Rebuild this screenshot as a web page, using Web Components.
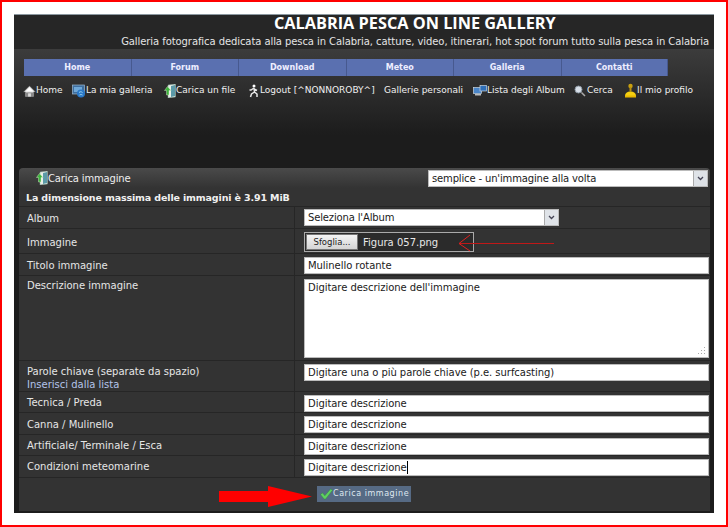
<!DOCTYPE html>
<html lang="it"><head><meta charset="utf-8">
<style>
html,body{margin:0;padding:0;background:#fff}
body{width:728px;height:527px;overflow:hidden;font:10px "DejaVu Sans",sans-serif}
</style></head><body>
<gallery-page>
  <gallery-head></gallery-head>
  <main-nav></main-nav>
  <link-bar></link-bar>
  <upload-form></upload-form>
</gallery-page>
<script>
const ICONS={
home:`<svg width="13" height="14" viewBox="0 0 14 14"><path d="M7 1.500L.5 8h2v5h9V8h2z" fill="#eee" stroke="#555" stroke-width=".6"/><path d="M2.500 8.500h9V13h-9z" fill="#8a8a8a"/><path d="M3.500 7L7 3.500 10.500 7z" fill="#fff"/><rect x="5.500" y="9.500" width="3" height="3.500" fill="#ddd"/></svg>`,
gal:`<svg width="14" height="14" viewBox="0 0 14 14"><rect x=".5" y="1" width="12" height="9" fill="#3f6f9f" stroke="#9cb8d0" stroke-width=".7"/><rect x="2" y="3" width="8" height="5" fill="#6fa8d8"/><circle cx="9" cy="9.500" r="4" fill="#2a78c8"/><path d="M7 8.500c1.500-1 2-1 3.500 0M7.500 11c1-.6 2-.6 3 0" stroke="#9fd8f0" fill="none"/></svg>`,
up:`<svg width="12" height="14" viewBox="0 0 12 14"><path d="M4 1l7.500-1v13L4 14z" fill="#e8efe8" stroke="#7a9a8a" stroke-width=".5"/><path d="M7 2l4-1v11l-4 1z" fill="#5b9aa8"/><path d="M3.500 2.500L.5 6.500h2V11H5V6.500h2z" fill="#3db43d" stroke="#e8f8d8" stroke-width=".4"/></svg>`,
run:`<svg width="11" height="14" viewBox="0 0 11 14"><circle cx="6" cy="2" r="1.500" fill="#fff"/><path d="M6 4L3 6l-1.500 0M6 4l.5 4-3 2-1 3M6.500 8l2.500 2v3M6 5l3 1.500" stroke="#e8e8e8" stroke-width="1.500" fill="none"/></svg>`,
mon:`<svg width="14" height="11" viewBox="0 0 14 11"><rect x=".5" y="2.500" width="8" height="6" fill="#4a85c8" stroke="#c8d4e0" stroke-width=".7"/><rect x="7" y=".5" width="6.500" height="5.500" fill="#2f6fb8" stroke="#c8d4e0" stroke-width=".7"/><rect x="2" y="9" width="6" height="1.500" fill="#bbb"/></svg>`,
mag:`<svg width="13" height="12" viewBox="0 0 13 12"><circle cx="4.500" cy="4.500" r="3.500" fill="#d8dfe8" stroke="#8a95a0"/><path d="M7.500 7.500L11 11" stroke="#aaa" stroke-width="1.500"/></svg>`,
prof:`<svg width="13" height="15" viewBox="0 0 13 15"><circle cx="6.500" cy="3" r="2.200" fill="#c8a010"/><path d="M5.500 4h2v4.500h-2z" fill="#b89010"/><path d="M1 13c0-3 2-4.500 5.500-4.500S12 10 12 13z" fill="#f5cf10"/><rect x="1" y="12.500" width="11" height="2" fill="#e8b800"/></svg>`,
check:`<svg width="13" height="12" viewBox="0 0 14 12"><path d="M.5 6.500l2.300-1.700 2.400 3L11.500.5l2 1.500-7.500 9.500H4.500z" fill="#5fd05f" stroke="#2f8f3f" stroke-width=".5"/></svg>`
};
function def(name,html){customElements.define(name,class extends HTMLElement{constructor(){super();this.attachShadow({mode:'open'}).innerHTML=typeof html==='function'?html(this):html;}});}

def('gallery-page',`<style>
:host{display:block;box-sizing:border-box;width:728px;height:527px;border:2px solid #f00;padding:12px;background:#fff}
.p{height:499px;display:flex;flex-direction:column;border-top:1px solid #8c98a0;background:linear-gradient(#3c3c3c 34px,#1c1c1c 120px,#1c1c1c);box-sizing:border-box}
</style><div class="p"><slot></slot></div>`);

def('gallery-head',`<style>
:host{display:block;height:34px;background:#262626;color:#fff;position:relative}
h1{margin:0;font:bold 16.300px/17px "Open Sans",sans-serif;color:#fff;position:absolute;left:260px;top:0;white-space:nowrap}
p{margin:0;position:absolute;right:5px;top:20px;font:10px/14px "DejaVu Sans",sans-serif;letter-spacing:-.08px;color:#e4e4e4;white-space:nowrap}
</style><h1>CALABRIA PESCA ON LINE GALLERY</h1><p>Galleria fotografica dedicata alla pesca in Calabria, catture, video, itinerari, hot spot forum tutto sulla pesca in Calabria</p>`);

def('main-nav',`<style>
:host{display:flex;margin:10px 0 0 10px;width:644px;height:17px}
a{box-sizing:border-box;flex:0 0 107.500px;height:17px;background:#5a70b0;border-right:1px solid #47598f;color:#eef;font:bold 8px/17px "DejaVu Sans",sans-serif;text-align:center}
a:last-child{flex-basis:106.500px}
</style><a>Home</a><a>Forum</a><a>Download</a><a>Meteo</a><a>Galleria</a><a>Contatti</a>`);

def('link-bar',`<style>
:host{display:block;position:relative;height:15px;margin:7px 0 0 9px;color:#f0f0f0;font:9px/15px "DejaVu Sans",sans-serif;white-space:nowrap}
span{display:inline-flex;align-items:center;position:absolute;top:0;height:15px}
</style>
<span style="left:0">${ICONS.home}Home</span>
<span style="left:49px">${ICONS.gal}La mia galleria</span>
<span style="left:141px">${ICONS.up}Carica un file</span>
<span style="left:225px;gap:1px">${ICONS.run}Logout [^NONNOROBY^]</span>
<span style="left:361px">Gallerie personali</span>
<span style="left:450px">${ICONS.mon}Lista degli Album</span>
<span style="left:551px">${ICONS.mag}Cerca</span>
<span style="left:601px">${ICONS.prof}Il mio profilo</span>`);

def('form-row',el=>`<style>
:host{display:grid;grid-template-columns:276px 1fr;height:${el.getAttribute('h')}px;background:#333;border-bottom:1px solid #262626;box-sizing:border-box;color:#e6e6e6;font:10px/13px "DejaVu Sans",sans-serif}
.l{padding:${el.getAttribute('lt')||4}px 8px 0 8px;border-right:1px solid #262626}
.r{padding:${el.getAttribute('rt')||3}px 0 0 9px}
</style><div class="l"><slot name="l"></slot></div><div class="r"><slot></slot></div>`);

def('text-box',el=>`<style>
:host{display:block;box-sizing:border-box;height:${el.getAttribute('h')||17}px;width:${el.getAttribute('w')||405}px;background:#fff;border:1px solid #bbb;color:#1a1a1a;font:10px/15px "DejaVu Sans",sans-serif;letter-spacing:-.05px;padding:0 3px;position:relative;white-space:nowrap}
.c{display:inline-block;width:1px;height:13px;background:#000;vertical-align:-3px}
.g{position:absolute;right:2px;bottom:2px}
</style><slot></slot>${el.hasAttribute('caret')?'<span class="c"></span>':''}${el.hasAttribute('grip')?'<svg class="g" width="9" height="9" viewBox="0 0 9 9"><g fill="#aaa"><rect x="7" y="1" width="1" height="1"/><rect x="4" y="4" width="1" height="1"/><rect x="7" y="4" width="1" height="1"/><rect x="1" y="7" width="1" height="1"/><rect x="4" y="7" width="1" height="1"/><rect x="7" y="7" width="1" height="1"/></g></svg>':''}`);

def('select-box',el=>`<style>
:host{display:flex;box-sizing:border-box;height:17px;width:${el.getAttribute('w')}px;background:#fff;border:1px solid #bbb;color:#1a1a1a;font:10px/16px "DejaVu Sans",sans-serif;letter-spacing:-.15px;padding-left:3px;white-space:nowrap}
.t{flex:1}
.b{width:13px;background:#dfe3e8;border-left:1px solid #aaa;display:flex;align-items:center;justify-content:center}
</style><div class="t"><slot></slot></div><div class="b"><svg width="7" height="5" viewBox="0 0 7 5"><path d="M1 1l2.500 2.500L6 1" fill="none" stroke="#445" stroke-width="1.300"/></svg></div>`);

def('file-box',`<style>
:host{display:flex;box-sizing:border-box;height:20px;width:170px;align-items:center;border:1px solid #aaa;background:#2b2b2b;color:#e8e8e8;font:10px/15px "DejaVu Sans",sans-serif;padding:0 1px;gap:5px;position:relative}
.b{box-sizing:border-box;width:52px;height:16px;background:linear-gradient(#f4f4f4,#d4d4d4);border:1px solid #777;color:#222;font:8.500px/14px "DejaVu Sans",sans-serif;text-align:center}
svg{position:absolute;left:153px;top:2px;overflow:visible}
</style><div class="b">Sfoglia...</div><slot></slot>
<svg width="96" height="16"><path d="M96 8.500H1" stroke="#c01818" stroke-width="1"/><path d="M12 0L1 8.500 12 16" fill="none" stroke="#e02020" stroke-width="1"/></svg>`);

def('upload-form',`<style>
:host{display:block;position:absolute;left:19px;top:168px;width:691px;height:342px;font:10px "DejaVu Sans",sans-serif}
.h{height:20px;display:flex;align-items:center;justify-content:space-between;background:linear-gradient(#4a4a4a,#333);border-radius:4px 4px 0 0;color:#eee;padding:0 2px 0 17px;box-sizing:border-box}
.h span{display:inline-flex;align-items:center;letter-spacing:-.15px}
.b{height:19px;background:#333;border-bottom:1px solid #262626;box-sizing:border-box;color:#f0f0f0;font:bold 9.500px/19px "DejaVu Sans",sans-serif;letter-spacing:-.14px;padding-left:7px}
a{color:#b4c4ea;text-decoration:none}
.f{position:relative;height:33px;background:#333}
.btn{position:absolute;left:298px;top:8px;box-sizing:border-box;width:94px;height:16px;background:#566a84;color:#dfe8f0;font:8px/13px "DejaVu Sans",sans-serif;letter-spacing:.55px;display:flex;align-items:center;gap:0;padding:0 0 2px 3px;white-space:nowrap}
.btn svg{margin-top:2px}
.arr{position:absolute;left:200px;top:8px}
</style>
<div class="h"><span>${ICONS.up}Carica immagine</span><select-box w="280">semplice - un'immagine alla volta</select-box></div>
<div class="b">La dimensione massima delle immagini è 3.91 MiB</div>
<form-row h="22" rt="2" lt="5"><span slot="l">Album</span><select-box w="255">Seleziona l'Album</select-box></form-row>
<form-row h="25" lt="7"><span slot="l">Immagine</span><file-box>Figura 057.png</file-box></form-row>
<form-row h="22" lt="5"><span slot="l">Titolo immagine</span><text-box>Mulinello rotante</text-box></form-row>
<form-row h="85" lt="3"><span slot="l">Descrizione immagine</span><text-box h="79" grip>Digitare descrizione dell'immagine</text-box></form-row>
<form-row h="31"><span slot="l">Parole chiave (separate da spazio)<br><a>Inserisci dalla lista</a></span><text-box>Digitare una o più parole chiave (p.e. surfcasting)</text-box></form-row>
<form-row h="21"><span slot="l">Tecnica / Preda</span><text-box>Digitare descrizione</text-box></form-row>
<form-row h="22" lt="5"><span slot="l">Canna / Mulinello</span><text-box>Digitare descrizione</text-box></form-row>
<form-row h="21"><span slot="l">Artificiale/ Terminale / Esca</span><text-box>Digitare descrizione</text-box></form-row>
<form-row h="22"><span slot="l">Condizioni meteomarine</span><text-box caret>Digitare descrizione</text-box></form-row>
<div class="f">
<svg class="arr" width="93" height="21" viewBox="0 0 93 21"><path d="M0 5h49V0l44 10.500-44 10.500v-5H0z" fill="#f00"/></svg>
<div class="btn">${ICONS.check}Carica immagine</div></div>`);
</script></body></html>
